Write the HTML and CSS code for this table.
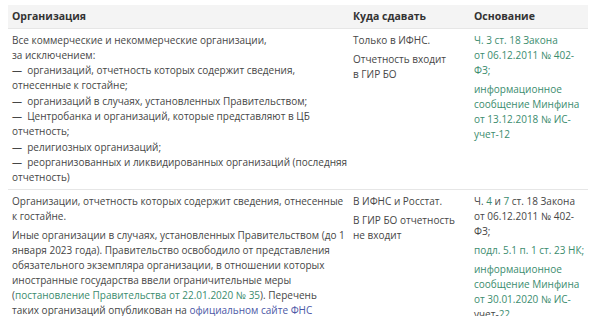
FILE: index.html
```html
<!DOCTYPE html>
<html lang="ru">
<head>
<meta charset="utf-8">
<link rel="stylesheet" href="styles.css">
</head>
<body>
<table class="report">
  <thead>
    <tr>
      <th class="c-org">Организация</th>
      <th class="c-where">Куда сдавать</th>
      <th class="c-base">Основание</th>
    </tr>
  </thead>
  <tbody>
    <tr>
      <td>
        <p class="dense">Все коммерческие и некоммерческие организации,<br>за исключением:<br>— &nbsp;организаций, отчетность которых содержит сведения,<br>отнесенные к гостайне;<br>— &nbsp;организаций в случаях, установленных Правительством;<br>— &nbsp;Центробанка и организаций, которые представляют в ЦБ<br>отчетность;<br>— &nbsp;религиозных организаций;<br>— &nbsp;реорганизованных и ликвидированных организаций (последняя<br>отчетность)</p>
      </td>
      <td>
        <p>Только в ИФНС.</p>
        <p>Отчетность входит<br>в ГИР БО</p>
      </td>
      <td>
        <p class="link">Ч. 3 ст. 18 Закона<br>от 06.12.2011 № 402-<br>ФЗ;</p>
        <p class="link">информационное<br>сообщение Минфина<br>от 13.12.2018 № ИС-<br>учет-12</p>
      </td>
    </tr>
    <tr>
      <td>
        <p>Организации, отчетность которых содержит сведения, отнесенные<br>к гостайне.</p>
        <p>Иные организации в случаях, установленных Правительством (до 1<br>января 2023 года). Правительство освободило от представления<br>обязательного экземпляра организации, в отношении которых<br>иностранные государства ввели ограничительные меры<br>(<span class="link">постановление Правительства от 22.01.2020 № 35</span>). Перечень<br>таких организаций опубликован на <span class="link-blue">официальном сайте ФНС</span></p>
      </td>
      <td>
        <p>В ИФНС и Росстат.</p>
        <p>В ГИР БО отчетность<br>не входит</p>
      </td>
      <td>
        <p>Ч. <span class="link">4</span> и <span class="link">7</span> ст. 18 Закона<br>от 06.12.2011 № 402-<br>ФЗ;</p>
        <p class="link">подл. 5.1 п. 1 ст. 23 НК;</p>
        <p><span class="link">информационное<br>сообщение Минфина<br>от 30.01.2020 № ИС-</span><br>учет-<span class="link">22</span></p>
      </td>
    </tr>
  </tbody>
</table>
</body>
</html>
```

FILE: styles.css
```css
html, body {
  margin: 0;
  padding: 0;
  background: #ffffff;
}
body {
  padding: 5px 8px 0 8px;
  font-family: "Open Sans", "Noto Sans", sans-serif;
  font-size: 10px;
  color: #464646;
}
.report {
  width: 580px;
  border-collapse: collapse;
  table-layout: fixed;
}
.report th,
.report td {
  box-sizing: border-box;
}
.report th {
  background: #f4f4f4;
  color: #333333;
  font-weight: 700;
  font-size: 10.5px;
  text-align: left;
  height: 23px;
  padding: 0 4px;
  border-bottom: 1px solid #e6e6e6;
  line-height: 15px;
}
.c-org { width: 341px; }
.c-where { width: 121px; }
.c-base { width: 118px; }
.report td {
  vertical-align: top;
  padding: 4px 4px 4px 4px;
  line-height: 15px;
  white-space: nowrap;
}
.report td:last-child {
  padding-right: 0;
}
.report tbody tr + tr td {
  border-top: 1px solid #e6e6e6;
}
.report p {
  margin: 0 0 4px 0;
}
.report p:last-child {
  margin-bottom: 0;
}
.report p.dense {
  line-height: 15.3px;
}
.link {
  color: #3b8c6e;
}
.link-blue {
  color: #4b57a6;
}
```
